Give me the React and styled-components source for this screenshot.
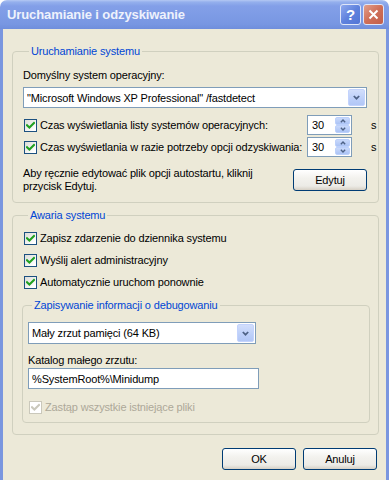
import React from "react";
import styled, { createGlobalStyle } from "styled-components";

const GlobalStyle = createGlobalStyle`
  html, body { margin: 0; padding: 0; background: #ffffff; }
  #root { width: 389px; height: 480px; overflow: hidden; }
  * { box-sizing: border-box; }
`;

const FONT = `Tahoma, "Liberation Sans", Arial, sans-serif`;

const Window = styled.div`
  width: 389px;
  height: 480px;
  display: flex;
  flex-direction: column;
  font-family: ${FONT};
  font-size: 11px;
  letter-spacing: -0.15px;
  color: #000;
`;

const TitleBar = styled.div`
  height: 29px;
  flex: none;
  display: flex;
  align-items: center;
  padding: 0 5px 1px 7px;
  border-radius: 7px 7px 0 0;
  background: linear-gradient(
    to bottom,
    #b4c8f3 0px,
    #95b0ed 2px,
    #839fe8 6px,
    #7d9be5 16px,
    #7897e2 24px,
    #6f8edc 29px
  );
`;

const TitleText = styled.div`
  flex: 1;
  font-family: "Liberation Sans", Arial, sans-serif;
  font-weight: bold;
  font-size: 13px;
  color: #eef2fc;
  letter-spacing: -0.1px;
`;

const CaptionButton = styled.div`
  width: 21px;
  height: 21px;
  margin-left: 2px;
  border-radius: 3px;
  border: 1px solid #dfe6f8;
  display: flex;
  align-items: center;
  justify-content: center;
  color: #ffffff;
  font-family: "Liberation Sans", Arial, sans-serif;
  font-weight: bold;
  font-size: 15px;
  background: ${(p) =>
    p.$kind === "close"
      ? "linear-gradient(to bottom right, #e29f8c, #cf6f58 50%, #c25f4b)"
      : "linear-gradient(to bottom right, #8fa9ee, #5f82dd 50%, #5275d6)"};
`;

const Body = styled.div`
  flex: 1;
  background: #ece9d8;
  border-left: 3px solid #7a96df;
  border-right: 3px solid #7a96df;
  padding: 16px 7px 0 9px;
  display: flex;
  flex-direction: column;
`;

const Group = styled.fieldset`
  margin: ${(p) => p.$mt || 0}px 0 0 0;
  border: 1px solid #d0d0bf;
  border-radius: 4px;
  padding: 0 ${(p) => p.$pr}px ${(p) => p.$pb}px ${(p) => p.$pl}px;
  min-width: 0;
`;

const Legend = styled.legend`
  color: #0046d5;
  margin-left: ${(p) => p.$ml}px;
  padding: 0 2px;
  line-height: 13px;
  height: 13px;
`;

const Col = styled.div`
  display: flex;
  flex-direction: column;
`;

const Text = styled.div`
  line-height: 13px;
  margin-top: ${(p) => p.$mt || 0}px;
  color: ${(p) => (p.$disabled ? "#aca899" : "#000")};
`;

const Select = styled.div`
  margin-top: ${(p) => p.$mt || 0}px;
  width: ${(p) => (p.$w ? `${p.$w}px` : "auto")};
  height: ${(p) => p.$h || 21}px;
  background: #fff;
  border: 1px solid #7f9db9;
  display: flex;
  align-items: center;
  padding-left: 3px;
`;

const SelectValue = styled.div`
  flex: 1;
  white-space: nowrap;
  overflow: hidden;
`;

const DropButton = styled.div`
  width: 17px;
  align-self: stretch;
  margin: 1px;
  border-radius: 2px;
  background: linear-gradient(to bottom, #d2defb, #bccff9 60%, #b2c7f6);
  border: 1px solid #c3d3fd;
  display: flex;
  align-items: center;
  justify-content: center;
`;

const CheckRow = styled.div`
  display: flex;
  align-items: center;
  height: ${(p) => p.$h || 16}px;
  margin-top: ${(p) => p.$mt || 0}px;
  margin-left: ${(p) => p.$ml || 1}px;
  margin-right: ${(p) => p.$mr || 0}px;
`;

const Box = styled.div`
  width: 13px;
  height: 13px;
  flex: none;
  border: 1px solid ${(p) => (p.$disabled ? "#cac8bb" : "#1c5180")};
  background: ${(p) =>
    p.$disabled ? "#ffffff" : "linear-gradient(135deg, #dcdcd7, #ffffff 85%)"};
  display: flex;
  align-items: center;
  justify-content: center;
`;

const CheckLabel = styled.div`
  flex: 1;
  margin-left: 3px;
  white-space: nowrap;
  color: ${(p) => (p.$disabled ? "#aca899" : "#000")};
`;

const Spin = styled.div`
  width: 45px;
  height: 20px;
  flex: none;
  border: 1px solid #7f9db9;
  background: #fff;
  display: flex;
  align-items: center;
  padding-left: 4px;
`;

const SpinValue = styled.div`
  flex: 1;
`;

const SpinButtons = styled.div`
  width: 15px;
  align-self: stretch;
  margin: 1px;
  display: flex;
  flex-direction: column;
`;

const SpinBtn = styled.div`
  flex: 1;
  border-radius: 2px;
  background: linear-gradient(to bottom, #c9d9fb, #abc3f5);
  border: 1px solid #bcd0fb;
  display: flex;
  align-items: center;
  justify-content: center;
`;

const Unit = styled.div`
  width: 6px;
  margin-left: 19px;
  flex: none;
`;

const EditRow = styled.div`
  display: flex;
  align-items: flex-start;
  margin-top: ${(p) => p.$mt || 0}px;
  justify-content: space-between;
`;

const Button = styled.div`
  width: 74px;
  height: 22px;
  flex: none;
  border: 1px solid #003c74;
  border-radius: 3px;
  background: linear-gradient(to bottom, #ffffff, #f3f2ee 40%, #ecebe6 80%, #d6d0c5);
  display: flex;
  align-items: center;
  justify-content: center;
  margin-top: ${(p) => p.$mt || 0}px;
`;

const Input = styled.div`
  width: ${(p) => p.$w}px;
  height: 21px;
  border: 1px solid #7f9db9;
  background: #fff;
  display: flex;
  align-items: center;
  padding-left: 3px;
  margin-top: ${(p) => p.$mt || 0}px;
`;

const Footer = styled.div`
  display: flex;
  justify-content: flex-end;
  gap: 7px;
  margin-top: 13px;
  padding-right: 2px;
`;

const CheckMark = ({ disabled }) => (
  <svg width="9" height="9" viewBox="0 0 9 9">
    <polyline
      points="1,4.2 3.4,6.6 8,2"
      fill="none"
      stroke={disabled ? "#cac8bb" : "#21a121"}
      strokeWidth="2.1"
      strokeLinecap="square"
    />
  </svg>
);

const Check = ({ children, disabled, trailing, ...rest }) => (
  <CheckRow {...rest}>
    <Box $disabled={disabled}>
      <CheckMark disabled={disabled} />
    </Box>
    <CheckLabel $disabled={disabled}>{children}</CheckLabel>
    {trailing}
  </CheckRow>
);

const Chevron = ({ up, w = 7, h = 5 }) => (
  <svg width={w} height={h} viewBox="0 0 7 5">
    <polyline
      points={up ? "0.8,4 3.5,1.3 6.2,4" : "0.8,1 3.5,3.7 6.2,1"}
      fill="none"
      stroke="#4d6185"
      strokeWidth="1.7"
    />
  </svg>
);

const Dropdown = ({ value, ...rest }) => (
  <Select {...rest}>
    <SelectValue>{value}</SelectValue>
    <DropButton>
      <Chevron />
    </DropButton>
  </Select>
);

const Spinner = ({ value }) => (
  <>
    <Spin>
      <SpinValue>{value}</SpinValue>
      <SpinButtons>
        <SpinBtn>
          <Chevron up w={6} h={4} />
        </SpinBtn>
        <SpinBtn>
          <Chevron w={6} h={4} />
        </SpinBtn>
      </SpinButtons>
    </Spin>
    <Unit>s</Unit>
  </>
);

export default function App() {
  return (
    <>
      <GlobalStyle />
      <Window>
        <TitleBar>
          <TitleText>Uruchamianie i odzyskiwanie</TitleText>
          <CaptionButton>?</CaptionButton>
          <CaptionButton $kind="close">
            <svg width="11" height="11" viewBox="0 0 11 11">
              <path d="M1.5 1.5 L9.5 9.5 M9.5 1.5 L1.5 9.5" stroke="#fff" strokeWidth="2" />
            </svg>
          </CaptionButton>
        </TitleBar>
        <Body>
          <Group $pl={10} $pr={11} $pb={9}>
            <Legend $ml={6}>Uruchamianie systemu</Legend>
            <Col>
              <Text $mt={11}>Domyślny system operacyjny:</Text>
              <Dropdown
                $mt={5}
                value={'"Microsoft Windows XP Professional" /fastdetect'}
              />
              <Check $h={20} $mt={7} $mr={-10} trailing={<Spinner value="30" />}>
                Czas wyświetlania listy systemów operacyjnych:
              </Check>
              <Check $h={20} $mt={2} $mr={-10} trailing={<Spinner value="30" />}>
                Czas wyświetlania w razie potrzeby opcji odzyskiwania:
              </Check>
              <EditRow $mt={10}>
                <Text>
                  Aby ręcznie edytować plik opcji autostartu, kliknij
                  <br />
                  przycisk Edytuj.
                </Text>
                <Button $mt={2}>Edytuj</Button>
              </EditRow>
            </Col>
          </Group>

          <Group $mt={6} $pl={9} $pr={8} $pb={11}>
            <Legend $ml={6}>Awaria systemu</Legend>
            <Col>
              <Check $mt={8} $ml={2}>
                Zapisz zdarzenie do dziennika systemu
              </Check>
              <Check $mt={6} $ml={2}>
                Wyślij alert administracyjny
              </Check>
              <Check $mt={6} $ml={2}>
                Automatycznie uruchom ponownie
              </Check>
              <Group $mt={9} $pl={5} $pr={8} $pb={7}>
                <Legend $ml={4}>Zapisywanie informacji o debugowaniu</Legend>
                <Col>
                  <Dropdown $mt={10} $w={228} $h={22} value="Mały zrzut pamięci (64 KB)" />
                  <Text $mt={10}>Katalog małego zrzutu:</Text>
                  <Input $mt={1} $w={231}>%SystemRoot%\Minidump</Input>
                  <Check $mt={10} disabled>
                    Zastąp wszystkie istniejące pliki
                  </Check>
                </Col>
              </Group>
            </Col>
          </Group>

          <Footer>
            <Button>OK</Button>
            <Button>Anuluj</Button>
          </Footer>
        </Body>
      </Window>
    </>
  );
}
